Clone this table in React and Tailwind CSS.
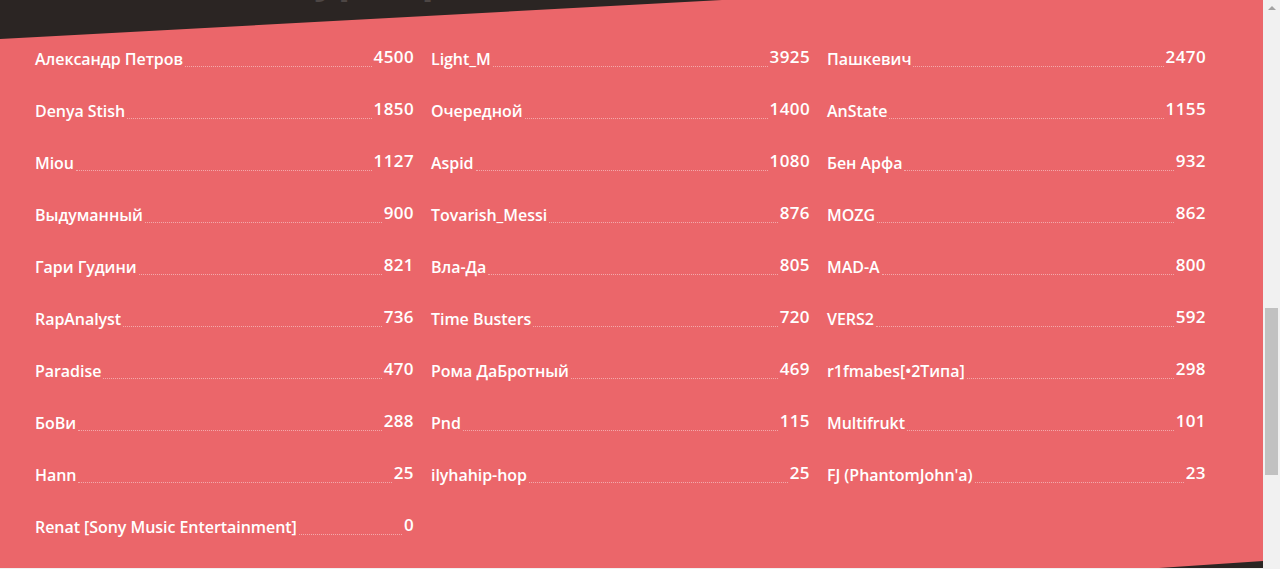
import React from 'react';

const players = [
  ['Александр Петров', '4500'],
  ['Light_M', '3925'],
  ['Пашкевич', '2470'],
  ['Denya Stish', '1850'],
  ['Очередной', '1400'],
  ['AnState', '1155'],
  ['Miou', '1127'],
  ['Aspid', '1080'],
  ['Бен Арфа', '932'],
  ['Выдуманный', '900'],
  ['Tovarish_Messi', '876'],
  ['MOZG', '862'],
  ['Гари Гудини', '821'],
  ['Вла-Да', '805'],
  ['MAD-A', '800'],
  ['RapAnalyst', '736'],
  ['Time Busters', '720'],
  ['VERS2', '592'],
  ['Paradise', '470'],
  ['Рома ДаБротный', '469'],
  ['r1fmabes[•2Типа]', '298'],
  ['БоВи', '288'],
  ['Pnd', '115'],
  ['Multifrukt', '101'],
  ['Hann', '25'],
  ['ilyhahip-hop', '25'],
  ['FJ (PhantomJohn\'a)', '23'],
  ['Renat [Sony Music Entertainment]', '0'],
];

const ScoreRow = ({ name, score }) => (
  <div className="flex items-baseline h-6 leading-6">
    <span className="whitespace-nowrap">{name}</span>
    <span className="flex-1 mx-[2px] border-b border-dotted border-[#f3a9ab] translate-y-[2px]" />
    <span className="relative -top-[2px] text-[17px] tracking-[0.4px]">{score}</span>
  </div>
);

export default function App() {
  return (
    <div className="flex w-[1280px] h-[569px] overflow-hidden bg-[#f1f1f1]">
      {/* Main panel */}
      <div className="relative w-[1263px] h-[568px] bg-[#eb666a] overflow-hidden">
        <div className="absolute left-0 top-0 w-[722px] h-[39px] bg-[#2b2523] [clip-path:polygon(0_0,100%_0,0_100%)]" />
        <div className="absolute left-[290px] -top-[42px] text-[40px] leading-[40px] font-bold text-[#4d4644] font-['Open_Sans',sans-serif] tracking-wide">
          Турнир
        </div>
        <div className="absolute right-0 bottom-0 w-[104px] h-[7px] bg-[#2b2523] [clip-path:polygon(100%_0,100%_100%,0_100%)]" />

        <div
          className="grid grid-cols-[379px_379px_379px] gap-x-[17px] gap-y-[28px] pl-[35px] pt-[47px] text-white text-[16px] font-semibold tracking-[-0.05px] font-['Open_Sans',sans-serif]"
        >
          {players.map(([name, score]) => (
            <ScoreRow key={name} name={name} score={score} />
          ))}
        </div>
      </div>

      {/* Scrollbar */}
      <div className="w-[17px] h-[569px] bg-[#f1f1f1] flex flex-col items-center">
        <div className="mt-[6px] w-0 h-0 border-l-[4px] border-r-[4px] border-b-[4px] border-l-transparent border-r-transparent border-b-[#a3a3a3]" />
        <div className="mt-[298px] w-[13px] h-[167px] bg-[#c1c1c1]" />
      </div>
    </div>
  );
}
